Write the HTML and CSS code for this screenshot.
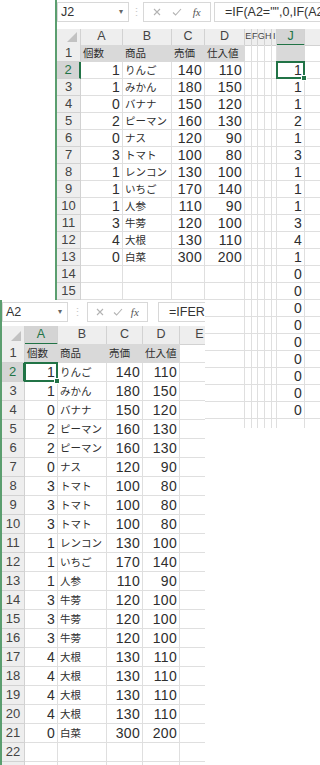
FILE: index.html
```html
<!DOCTYPE html>
<html>
<head>
    <title>売上表</title>
    <link rel="stylesheet" href="styles.css">
</head>
<body>
<div class="desk">
    <section class="sheet sheet-top">
        <div class="fbar">
            <div class="namebox">J2<span class="dd">&#9662;</span></div>
            <span class="grip">&#8942;</span>
            <div class="fbtns">
                <svg width="8" height="8" viewBox="0 0 8 8"><path d="M1 1L7 7M7 1L1 7" stroke="#b3b3b3" stroke-width="1.1" fill="none"/></svg>
                <svg width="10" height="8" viewBox="0 0 10 8"><path d="M1 4.5L3.6 7L9 1" stroke="#b3b3b3" stroke-width="1.1" fill="none"/></svg>
                <i>fx</i>
            </div>
            <div class="formula">=IF(A2="",0,IF(A2=</div>
        </div>
        <div class="r hd"><span class="corner"></span><span>A</span><span>B</span><span>C</span><span>D</span><span class="nw">E</span><span class="nw">F</span><span class="nw">G</span><span class="nw">H</span><span class="nw">I</span><span class="on">J</span><span></span></div>
        <div class="r"><span class="h">1</span><span class="t g">個数</span><span class="t g">商品</span><span class="t g">売価</span><span class="t g">仕入値</span><span></span><span></span><span></span><span></span><span></span><span class="g"></span><span></span></div>
        <div class="r"><span class="h on">2</span><span class="n">1</span><span class="t">りんご</span><span class="n">140</span><span class="n">110</span><span></span><span></span><span></span><span></span><span></span><span class="n sel">1</span><span></span></div>
        <div class="r"><span class="h">3</span><span class="n">1</span><span class="t">みかん</span><span class="n">180</span><span class="n">150</span><span></span><span></span><span></span><span></span><span></span><span class="n">1</span><span></span></div>
        <div class="r"><span class="h">4</span><span class="n">0</span><span class="t">バナナ</span><span class="n">150</span><span class="n">120</span><span></span><span></span><span></span><span></span><span></span><span class="n">1</span><span></span></div>
        <div class="r"><span class="h">5</span><span class="n">2</span><span class="t">ピーマン</span><span class="n">160</span><span class="n">130</span><span></span><span></span><span></span><span></span><span></span><span class="n">2</span><span></span></div>
        <div class="r"><span class="h">6</span><span class="n">0</span><span class="t">ナス</span><span class="n">120</span><span class="n">90</span><span></span><span></span><span></span><span></span><span></span><span class="n">1</span><span></span></div>
        <div class="r"><span class="h">7</span><span class="n">3</span><span class="t">トマト</span><span class="n">100</span><span class="n">80</span><span></span><span></span><span></span><span></span><span></span><span class="n">3</span><span></span></div>
        <div class="r"><span class="h">8</span><span class="n">1</span><span class="t">レンコン</span><span class="n">130</span><span class="n">100</span><span></span><span></span><span></span><span></span><span></span><span class="n">1</span><span></span></div>
        <div class="r"><span class="h">9</span><span class="n">1</span><span class="t">いちご</span><span class="n">170</span><span class="n">140</span><span></span><span></span><span></span><span></span><span></span><span class="n">1</span><span></span></div>
        <div class="r"><span class="h">10</span><span class="n">1</span><span class="t">人参</span><span class="n">110</span><span class="n">90</span><span></span><span></span><span></span><span></span><span></span><span class="n">1</span><span></span></div>
        <div class="r"><span class="h">11</span><span class="n">3</span><span class="t">牛蒡</span><span class="n">120</span><span class="n">100</span><span></span><span></span><span></span><span></span><span></span><span class="n">3</span><span></span></div>
        <div class="r"><span class="h">12</span><span class="n">4</span><span class="t">大根</span><span class="n">130</span><span class="n">110</span><span></span><span></span><span></span><span></span><span></span><span class="n">4</span><span></span></div>
        <div class="r"><span class="h">13</span><span class="n">0</span><span class="t">白菜</span><span class="n">300</span><span class="n">200</span><span></span><span></span><span></span><span></span><span></span><span class="n">1</span><span></span></div>
        <div class="r"><span class="h">14</span><span></span><span></span><span></span><span></span><span></span><span></span><span></span><span></span><span></span><span class="n">0</span><span></span></div>
        <div class="r"><span class="h">15</span><span></span><span></span><span></span><span></span><span></span><span></span><span></span><span></span><span></span><span class="n">0</span><span></span></div>
        <!-- rows 16+ sit under the second window; only the right-hand columns show -->
        <div class="r"><span class="h"></span><span></span><span></span><span></span><span></span><span></span><span></span><span></span><span></span><span></span><span class="n">0</span><span></span></div>
        <div class="r"><span class="h"></span><span></span><span></span><span></span><span></span><span></span><span></span><span></span><span></span><span></span><span class="n">0</span><span></span></div>
        <div class="r"><span class="h"></span><span></span><span></span><span></span><span></span><span></span><span></span><span></span><span></span><span></span><span class="n">0</span><span></span></div>
        <div class="r"><span class="h"></span><span></span><span></span><span></span><span></span><span></span><span></span><span></span><span></span><span></span><span class="n">0</span><span></span></div>
        <div class="r"><span class="h"></span><span></span><span></span><span></span><span></span><span></span><span></span><span></span><span></span><span></span><span class="n">0</span><span></span></div>
        <div class="r"><span class="h"></span><span></span><span></span><span></span><span></span><span></span><span></span><span></span><span></span><span></span><span class="n">0</span><span></span></div>
        <div class="r"><span class="h"></span><span></span><span></span><span></span><span></span><span></span><span></span><span></span><span></span><span></span><span class="n">0</span><span></span></div>
        <div class="r"><span class="h"></span><span></span><span></span><span></span><span></span><span></span><span></span><span></span><span></span><span></span><span></span><span></span></div>
    </section>

    <section class="sheet sheet-bottom">
        <div class="fbar">
            <div class="namebox">A2<span class="dd">&#9662;</span></div>
            <span class="grip">&#8942;</span>
            <div class="fbtns">
                <svg width="8" height="8" viewBox="0 0 8 8"><path d="M1 1L7 7M7 1L1 7" stroke="#b3b3b3" stroke-width="1.1" fill="none"/></svg>
                <svg width="10" height="8" viewBox="0 0 10 8"><path d="M1 4.5L3.6 7L9 1" stroke="#b3b3b3" stroke-width="1.1" fill="none"/></svg>
                <i>fx</i>
            </div>
            <div class="formula">=IFERR</div>
        </div>
        <div class="r hd"><span class="corner"></span><span class="on">A</span><span>B</span><span>C</span><span>D</span><span>E</span></div>
        <div class="r"><span class="h">1</span><span class="t g">個数</span><span class="t g">商品</span><span class="t g">売価</span><span class="t g">仕入値</span><span></span></div>
        <div class="r"><span class="h on">2</span><span class="n sel">1</span><span class="t">りんご</span><span class="n">140</span><span class="n">110</span><span></span></div>
        <div class="r"><span class="h">3</span><span class="n">1</span><span class="t">みかん</span><span class="n">180</span><span class="n">150</span><span></span></div>
        <div class="r"><span class="h">4</span><span class="n">0</span><span class="t">バナナ</span><span class="n">150</span><span class="n">120</span><span></span></div>
        <div class="r"><span class="h">5</span><span class="n">2</span><span class="t">ピーマン</span><span class="n">160</span><span class="n">130</span><span></span></div>
        <div class="r"><span class="h">6</span><span class="n">2</span><span class="t">ピーマン</span><span class="n">160</span><span class="n">130</span><span></span></div>
        <div class="r"><span class="h">7</span><span class="n">0</span><span class="t">ナス</span><span class="n">120</span><span class="n">90</span><span></span></div>
        <div class="r"><span class="h">8</span><span class="n">3</span><span class="t">トマト</span><span class="n">100</span><span class="n">80</span><span></span></div>
        <div class="r"><span class="h">9</span><span class="n">3</span><span class="t">トマト</span><span class="n">100</span><span class="n">80</span><span></span></div>
        <div class="r"><span class="h">10</span><span class="n">3</span><span class="t">トマト</span><span class="n">100</span><span class="n">80</span><span></span></div>
        <div class="r"><span class="h">11</span><span class="n">1</span><span class="t">レンコン</span><span class="n">130</span><span class="n">100</span><span></span></div>
        <div class="r"><span class="h">12</span><span class="n">1</span><span class="t">いちご</span><span class="n">170</span><span class="n">140</span><span></span></div>
        <div class="r"><span class="h">13</span><span class="n">1</span><span class="t">人参</span><span class="n">110</span><span class="n">90</span><span></span></div>
        <div class="r"><span class="h">14</span><span class="n">3</span><span class="t">牛蒡</span><span class="n">120</span><span class="n">100</span><span></span></div>
        <div class="r"><span class="h">15</span><span class="n">3</span><span class="t">牛蒡</span><span class="n">120</span><span class="n">100</span><span></span></div>
        <div class="r"><span class="h">16</span><span class="n">3</span><span class="t">牛蒡</span><span class="n">120</span><span class="n">100</span><span></span></div>
        <div class="r"><span class="h">17</span><span class="n">4</span><span class="t">大根</span><span class="n">130</span><span class="n">110</span><span></span></div>
        <div class="r"><span class="h">18</span><span class="n">4</span><span class="t">大根</span><span class="n">130</span><span class="n">110</span><span></span></div>
        <div class="r"><span class="h">19</span><span class="n">4</span><span class="t">大根</span><span class="n">130</span><span class="n">110</span><span></span></div>
        <div class="r"><span class="h">20</span><span class="n">4</span><span class="t">大根</span><span class="n">130</span><span class="n">110</span><span></span></div>
        <div class="r"><span class="h">21</span><span class="n">0</span><span class="t">白菜</span><span class="n">300</span><span class="n">200</span><span></span></div>
        <div class="r"><span class="h">22</span><span></span><span></span><span></span><span></span><span></span></div>
        <div class="r"><span class="h"></span><span></span><span></span><span></span><span></span><span></span></div>
    </section>
</div>
</body>
</html>
```

FILE: styles.css
```css
body {
    margin: 0;
    background: #fff;
}
.desk {
    position: relative;
    width: 320px;
    height: 765px;
    overflow: hidden;
    font-family: "Liberation Sans", "Noto Sans CJK JP", sans-serif;
    color: #2e2e2e;
}
.sheet {
    box-sizing: border-box;
    background: #fff;
    border-left: 2px solid #5b9e6f;
    overflow: hidden;
}
.sheet-top {
    margin-left: 55px;
    width: 265px;
    height: 428px;
}
.sheet-bottom {
    position: absolute;
    left: 0;
    top: 300px;
    width: 205px;
    height: 465px;
}

/* formula bar */
.fbar {
    display: flex;
    align-items: flex-start;
    padding-top: 2px;
    box-sizing: border-box;
    white-space: nowrap;
    font-size: 12.5px;
}
.sheet-top .fbar { height: 29px; }
.sheet-bottom .fbar { height: 26px; }
.namebox, .fbtns, .formula {
    box-sizing: border-box;
    height: 20px;
    line-height: 18px;
    border: 1px solid #d8d8d8;
    color: #333;
}
.namebox {
    position: relative;
    padding-left: 3px;
}
.sheet-top .namebox { width: 72px; }
.sheet-bottom .namebox { width: 66px; }
.dd {
    position: absolute;
    right: 5px;
    top: 0;
    font-size: 8px;
    color: #666;
}
.grip {
    text-align: center;
    color: #c8c8c8;
    line-height: 20px;
    font-size: 11px;
}
.sheet-top .grip { width: 14px; }
.sheet-bottom .grip { width: 19px; }
.fbtns {
    display: flex;
    align-items: center;
    justify-content: space-around;
    padding: 0 4px;
}
.sheet-top .fbtns { width: 68px; margin-right: 3px; }
.sheet-bottom .fbtns { width: 61px; margin-right: 10px; }
.fbtns i {
    font-family: "Liberation Serif", serif;
    font-size: 11px;
    color: #555;
}
.formula {
    flex: 1;
    padding-left: 10px;
    border-right: none;
    overflow: hidden;
}

/* grid */
.r {
    display: grid;
}
.sheet-top .r {
    grid-template-columns: 24px 42px 49px 33px 40px 7px 6px 7px 7px 5px 28px 40px;
    height: 17px;
    line-height: 16px;
}
.sheet-bottom .r {
    grid-template-columns: 23px 33px 49px 36px 37px 40px;
    height: 19px;
    line-height: 18px;
}
.r > span {
    position: relative;
    box-sizing: border-box;
    border-right: 1px solid #dfdfdf;
    border-bottom: 1px solid #dfdfdf;
    white-space: nowrap;
    font-size: 14px;
}
.sheet-top .r.hd {
    height: 16px;
    line-height: 15px;
}
.sheet-bottom .r.hd {
    height: 18px;
    line-height: 17px;
}
.hd > span, .r > .h {
    background: #eeeeee;
    border-color: #d2d2d2;
    color: #444;
    text-align: center;
    font-size: 13px;
}
.hd > span {
    display: flex;
    justify-content: center;
    font-size: 12.5px;
}
.hd > .nw {
    font-size: 9px;
    letter-spacing: -0.5px;
}
.hd > .on {
    background: #d4d4d4;
    color: #217346;
    border-bottom: 2px solid #217346;
}
.r > .h.on {
    background: #d4d4d4;
    color: #217346;
    border-right: 2px solid #217346;
}
.corner::after {
    content: "";
    position: absolute;
    right: 3px;
    bottom: 3px;
    width: 10px;
    height: 10px;
    background: #c2c2c2;
    clip-path: polygon(100% 0, 100% 100%, 0 100%);
}
.n {
    text-align: right;
    padding-right: 2px;
    letter-spacing: 0.3px;
}
.r > .t {
    padding-left: 2px;
    font-family: "Noto Sans CJK JP", sans-serif;
    font-size: 10.5px;
}
.r > .g {
    background: #d9d9d9;
    border-color: #d9d9d9;
}
.sel {
    z-index: 1;
}
.sel::after {
    content: "";
    position: absolute;
    left: -1px;
    top: -1px;
    right: -1px;
    bottom: -1px;
    border: 2px solid #217346;
}
.sel::before {
    content: "";
    position: absolute;
    right: -3px;
    bottom: -3px;
    width: 4px;
    height: 4px;
    background: #217346;
    border: 1px solid #fff;
    z-index: 1;
}
```
